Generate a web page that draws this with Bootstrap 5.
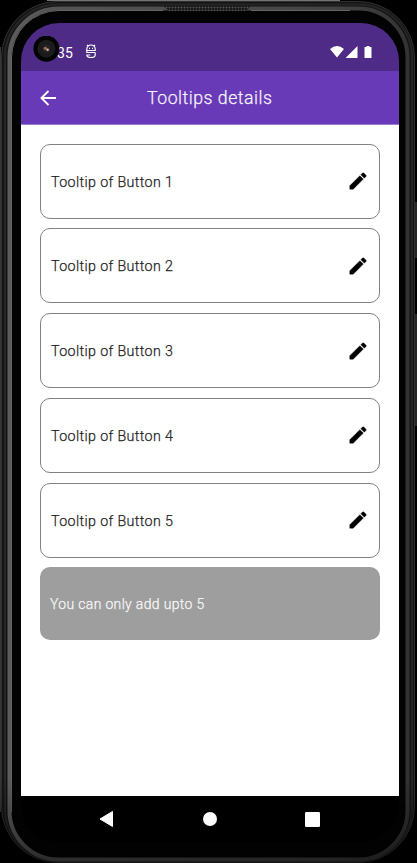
<!DOCTYPE html>
<html lang="en">
<head>
<meta charset="utf-8">
<meta name="viewport" content="width=device-width, initial-scale=1">
<title>Tooltips details</title>
<link rel="stylesheet" href="https://cdn.jsdelivr.net/npm/bootstrap@5.3.0/dist/css/bootstrap.min.css">
<style>
html,body{margin:0;height:863px;overflow:hidden;background:#000}
body{font-family:Roboto,"Liberation Sans",sans-serif}
.device{width:417px;height:863px;padding:23px 18px 21px 21px}
.shell{left:0;top:0;z-index:0}
.screen{width:378px;height:819px;border-radius:38px;z-index:1}
.statusbar{height:48px;background:#4e2b87;color:#fff;font-size:14px;padding:10px 26px 0 36px}
.statusbar .clock{letter-spacing:.1px;line-height:20px;width:17px;padding-top:1px}
.notice{margin-left:11px}
.appbar{height:54px;background:#683ab7;color:#f7f3fc;padding:0 18px;border-bottom:1px solid #9c80ce}
.appbar h1{font-size:19px;font-weight:300;letter-spacing:.55px;line-height:24px;margin:1px 0 0 90px;transform:scaleX(.93);transform-origin:left;-webkit-text-stroke:.25px}
.tips{padding:18.6px 19px 0;gap:9.7px;background:#fff}
.tip{height:75.1px;border:1px solid #828282;border-radius:10px;padding:0 10.5px 0 10px;color:#222;font-size:15.5px}
.tip span,.limit span{display:inline-block;transform:scaleX(.92);transform-origin:left;font-weight:300;letter-spacing:.4px;-webkit-text-stroke:.25px;padding-top:2px}
.limit{height:73px;margin-top:-.7px;border-radius:10px;background:#9e9e9e;color:#f8f8f8;padding:0 10px;font-size:15.5px}
.limit span{transform:scaleX(.9)}
.navkeys{height:46px;background:#000;padding:0 79px 0 77px}
.camera{left:12px;top:13px}
</style>
<script src="https://cdn.jsdelivr.net/npm/bootstrap@5.3.0/dist/js/bootstrap.bundle.min.js"></script>
</head>
<body>
<svg width="0" height="0" class="position-absolute"><defs><symbol id="pencil" viewBox="0 0 24 24"><path d="M3 17.25V21h3.75L17.81 9.94l-3.75-3.75L3 17.25zM20.71 7.04a1 1 0 0 0 0-1.41l-2.34-2.34a1 1 0 0 0-1.41 0l-1.83 1.83 3.75 3.75 1.83-1.83z" stroke="#000" stroke-width=".4"/></symbol></defs></svg>
<div class="device position-relative">
<svg class="shell position-absolute" width="417" height="863" viewBox="0 0 417 863">
<defs>
<linearGradient id="edge" gradientUnits="userSpaceOnUse" x1="0" x2="417" y1="0" y2="0"><stop offset="0" stop-color="#5e5e5e"/><stop offset=".12" stop-color="#555"/><stop offset=".8" stop-color="#444"/><stop offset="1" stop-color="#303030"/></linearGradient>
<linearGradient id="fade" x1="0" x2="0" y1="0" y2="1"><stop offset=".9" stop-color="#000" stop-opacity="0"/><stop offset="1" stop-color="#000" stop-opacity=".5"/></linearGradient>
<pattern id="mesh" width="3" height="3" patternUnits="userSpaceOnUse"><path d="M0 0h3v3H0z" fill="#151515"/><circle cx="1.5" cy="1.5" r="1" fill="#555"/></pattern></defs>
<path d="M47 .5H340" stroke="#707573"/>
<path d="M416 202v56M416 314v112" stroke="#262626" stroke-width="2"/>
<path d="M.5 47V812" stroke="#363636"/>
<rect x="1.5" y="1.5" width="413" height="861" rx="56" fill="#141414" stroke="#303030"/>
<rect x="5" y="4.5" width="407" height="857" rx="53" fill="#151515" stroke="#252525" stroke-width="2"/>
<rect x="9.5" y="8.5" width="398" height="851" rx="49" fill="#030303" stroke="url(#edge)" stroke-width="4"/>
<path d="M11.5 812V58a47.5 47.5 0 0 1 47.5-47.5H163M251 10.500H350" fill="none" stroke="#656565" stroke-width="1"/>
<rect width="417" height="863" fill="url(#fade)"/>
<path d="M163 6h88l-5 5h-77z" fill="url(#mesh)"/>
</svg>
<main class="screen position-relative overflow-hidden d-flex flex-column">
<header class="statusbar d-flex align-items-center flex-shrink-0">
<span class="clock">35</span>
<svg class="notice" width="12" height="16" viewBox="0 0 12 16" fill="none" stroke="#fff" stroke-width="1.2"><path d="M1.8 6.500V5a4.200 4 0 0 1 8.400 0v1.500zM1.800 6.500v2h8.400M1.300 11h4M10.200 8.500V11q0 2.500-4.200 2.500T1.800 11M3 2 2 1M9 2l1-1"/><path d="M4 4.400h1M7 4.400h1"/></svg>
<svg class="ms-auto" width="44" height="14" viewBox="0 0 44 14" fill="#fff"><path d="M1 4Q8-2 15 4L8 12.500zM16.500 13 28.500 1v12zM35.500 2h2V1h3v1h2v11h-7z"/></svg>
</header>
<svg class="camera position-absolute" width="28" height="28" viewBox="0 0 28 28"><circle cx="13.4" cy="12.7" r="13" fill="#030303"/><circle cx="13.4" cy="12.7" r="9" fill="#1b1b1b"/><circle cx="13.4" cy="12.7" r="4" fill="#292423"/><circle cx="12.3" cy="12.2" r="1.5" fill="#97705d"/><circle cx="14.6" cy="13.7" r="1.3" fill="#d1b7a5"/></svg>
<div class="appbar d-flex align-items-center flex-shrink-0">
<svg width="18" height="18" viewBox="0 0 18 18" fill="none" stroke="#fff" stroke-width="1.8"><path d="M17 9H2.500M9.500 2 2.400 9l7.100 7"/></svg>
<h1>Tooltips details</h1>
</div>
<section class="tips d-flex flex-column flex-grow-1">
<div class="tip d-flex align-items-center justify-content-between"><span>Tooltip of Button 1</span><svg width="22" height="22"><use href="#pencil"/></svg></div>
<div class="tip d-flex align-items-center justify-content-between"><span>Tooltip of Button 2</span><svg width="22" height="22"><use href="#pencil"/></svg></div>
<div class="tip d-flex align-items-center justify-content-between"><span>Tooltip of Button 3</span><svg width="22" height="22"><use href="#pencil"/></svg></div>
<div class="tip d-flex align-items-center justify-content-between"><span>Tooltip of Button 4</span><svg width="22" height="22"><use href="#pencil"/></svg></div>
<div class="tip d-flex align-items-center justify-content-between"><span>Tooltip of Button 5</span><svg width="22" height="22"><use href="#pencil"/></svg></div>
<div class="limit d-flex align-items-center"><span>You can only add upto 5</span></div>
</section>
<nav class="navkeys d-flex align-items-center justify-content-between flex-shrink-0" aria-label="System navigation">
<svg width="16" height="18" viewBox="0 0 16 18"><path d="M14.5 1.5v15L2 9z" fill="#fff" stroke="#fff" stroke-linejoin="round"/></svg>
<svg width="14" height="14"><circle cx="7" cy="7" r="7" fill="#fff"/></svg>
<svg width="15" height="15"><rect width="15" height="15" rx="1.3" fill="#fff"/></svg>
</nav>
</main>
</div>
</body>
</html>
